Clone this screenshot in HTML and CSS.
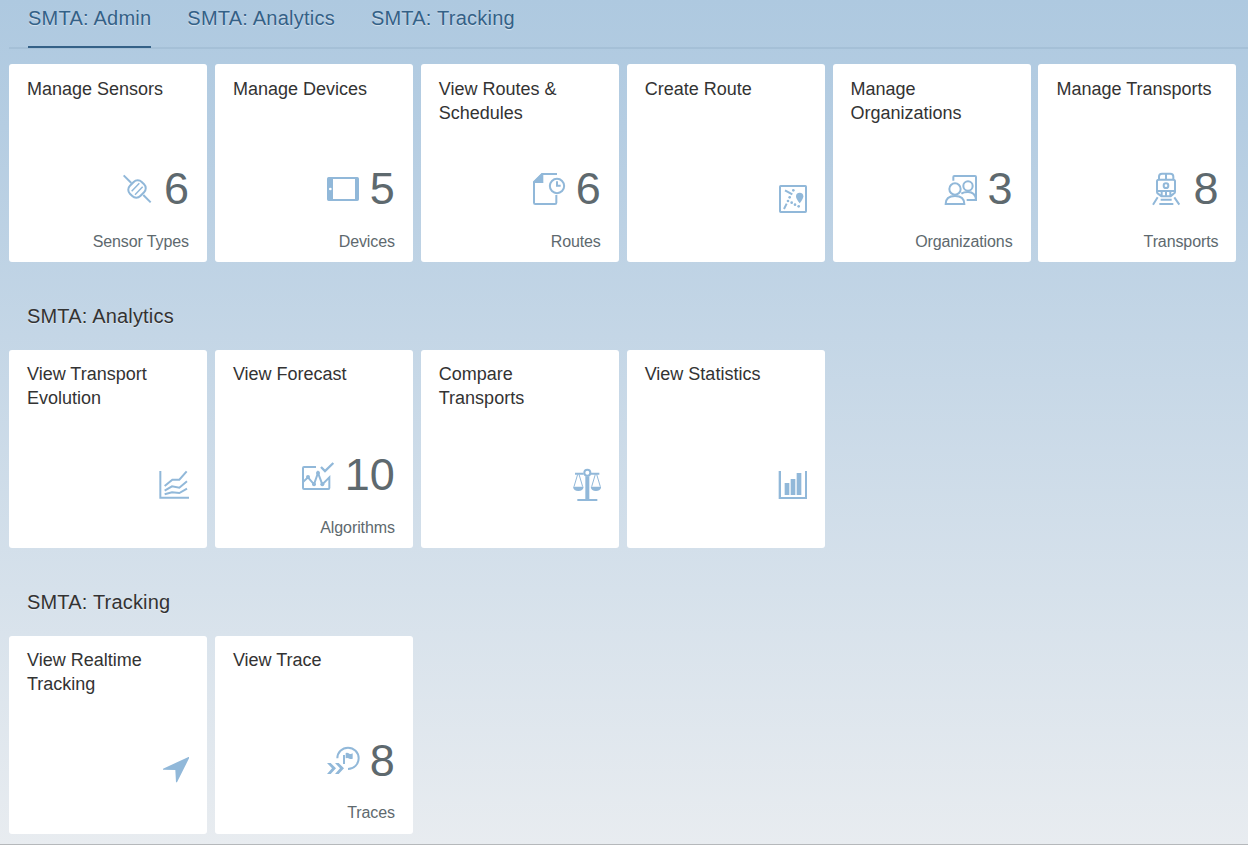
FILE: index.html
```html
<!DOCTYPE html>
<html lang="en">
<head>
<meta charset="utf-8">
<title>SMTA Launchpad</title>
<link rel="stylesheet" href="styles.css">
</head>
<body>
<div class="launchpad">
  <nav class="tabs">
    <a class="tab tab-active">SMTA: Admin</a>
    <a class="tab">SMTA: Analytics</a>
    <a class="tab">SMTA: Tracking</a>
  </nav>
  <main class="groups">
    <section class="group group-first">
      <div class="tiles">
        <article class="tile">
          <h3 class="title">Manage Sensors</h3>
          <div class="content">
            <svg class="icon" viewBox="30 24 120 120"><path d="M41 46L64 69M100 105L122 127"/><rect x="59" y="62" width="44" height="50" rx="17" transform="rotate(45 81 87)"/><path class="medium" d="M65 94L88 70M75 104L98 80"/></svg>
            <span class="number">6</span>
          </div>
          <p class="footer">Sensor Types</p>
        </article>
        <article class="tile">
          <h3 class="title">Manage Devices</h3>
          <div class="content">
            <svg class="icon solid" viewBox="33 24 120 120"><path fill-rule="evenodd" d="M41 51H127Q132 51 132 56V118Q132 123 127 123H41Q36 123 36 118V56Q36 51 41 51ZM54 57V117H120V57Z"/><circle class="hole" cx="46" cy="87" r="4"/></svg>
            <span class="number">5</span>
          </div>
          <p class="footer">Devices</p>
        </article>
        <article class="tile">
          <h3 class="title">View Routes &amp; Schedules</h3>
          <div class="content">
            <svg class="icon" viewBox="36 24 120 120"><path d="M111 42H66L42 66V128Q42 132 46 132H105Q109 132 109 128V105"/><path class="fill" d="M66 40H70V69H40V66Z"/><circle cx="111" cy="78" r="21.5"/><path d="M111 64V77H122"/></svg>
            <span class="number">6</span>
          </div>
          <p class="footer">Routes</p>
        </article>
        <article class="tile">
          <h3 class="title">Create Route</h3>
          <div class="content content-icon">
            <svg class="icon" viewBox="6 24 120 120"><rect x="45" y="48" width="78" height="78" rx="2"/><path d="M60 61L82 73M65 101L57 117"/><path class="fill" d="M104 100Q93 87 93 79A11 11 0 0 1 115 79Q115 87 104 100Z"/><g class="fill"><circle cx="85" cy="61" r="4"/><circle cx="74" cy="82" r="4"/><circle cx="69" cy="93" r="4"/><circle cx="80" cy="98" r="4"/><circle cx="90" cy="104" r="4"/><circle cx="101" cy="109" r="4"/></g></svg>
          </div>
        </article>
        <article class="tile">
          <h3 class="title">Manage Organizations</h3>
          <div class="content">
            <svg class="icon" viewBox="42 24 120 120"><path d="M70 62V51Q70 48 73 48H135Q138 48 138 51V120H110"/><circle cx="75" cy="87" r="17"/><circle cx="114" cy="78" r="14"/><path d="M47 132Q47 108 75 108T103 132ZM94 101Q101 96 114 96Q136 96 138 119"/></svg>
            <span class="number">3</span>
          </div>
          <p class="footer">Organizations</p>
        </article>
        <article class="tile">
          <h3 class="title">Manage Transports</h3>
          <div class="content">
            <svg class="icon" viewBox="28 24 120 120"><path d="M58 60V50Q58 41 67 41H92Q101 41 101 50V60M79 42V58"/><path d="M57 59H101Q106 59 106 64V96Q106 99 102 101L93 109H65L55 101Q52 99 52 96V64Q52 59 57 59ZM52 93H106M66 93V109M79 93V109M92 93V109"/><circle cx="79" cy="77" r="7"/><path d="M54 112L40 134M104 112L119 134M63 119H96M59 132H101"/></svg>
            <span class="number">8</span>
          </div>
          <p class="footer">Transports</p>
        </article>
      </div>
    </section>
    <section class="group group-middle">
      <h2 class="group-title">SMTA: Analytics</h2>
      <div class="tiles">
        <article class="tile">
          <h3 class="title">View Transport Evolution</h3>
          <div class="content content-icon">
            <svg class="icon" viewBox="12 27 120 120"><path d="M46 48V128H134M59 93L82 74H103L125 49M59 107L81 94L103 98L126 79M59 118L81 112L103 114L126 101"/></svg>
          </div>
        </article>
        <article class="tile">
          <h3 class="title">View Forecast</h3>
          <div class="content">
            <svg class="icon" viewBox="33 27 120 120"><path d="M78 66H42Q39 66 39 69V129Q39 132 42 132H115Q118 132 118 129V97L97 118L84 84L72 118L54 97L39 111"/><path class="bold" d="M93 66L105 78L130 54"/><g class="fill"><circle cx="54" cy="96" r="6"/><circle cx="84" cy="84" r="6"/><circle cx="72" cy="118" r="6"/><circle cx="97" cy="118" r="6"/></g></svg>
            <span class="number">10</span>
          </div>
          <p class="footer">Algorithms</p>
        </article>
        <article class="tile">
          <h3 class="title">Compare Transports</h3>
          <div class="content content-icon">
            <svg class="icon" viewBox="3 27 120 120"><path d="M45 56H71M93 56H118M52 135H112"/><circle cx="82" cy="53" r="9"/><path class="fill" d="M76 64H88V134H76ZM39 95H71Q69 108 55 108T39 95ZM92 95H124Q122 108 108 108T92 95Z"/><path class="thin" d="M53 58L42 95M57 58L68 95M106 58L95 95M110 58L121 95"/></svg>
          </div>
        </article>
        <article class="tile">
          <h3 class="title">View Statistics</h3>
          <div class="content content-icon">
            <svg class="icon solid" viewBox="6 27 120 120"><path d="M41 48H48V126H120V48H127V132H41ZM59 84H73V120H59ZM77 72H91V120H77ZM95 54H109V120H95Z"/></svg>
          </div>
        </article>
      </div>
    </section>
    <section class="group">
      <h2 class="group-title">SMTA: Tracking</h2>
      <div class="tiles">
        <article class="tile">
          <h3 class="title">View Realtime Tracking</h3>
          <div class="content content-icon">
            <svg class="icon solid" viewBox="-3 45 120 120"><path d="M120 64L81 142H78L76 105L39 104V101Z"/></svg>
          </div>
        </article>
        <article class="tile">
          <h3 class="title">View Trace</h3>
          <div class="content">
            <svg class="icon" viewBox="528 15 120 120"><path d="M562 70A32 32 0 1 1 594 102"/><path class="fill" d="M579 60H585V87H579ZM587 54Q593 52 598 56Q603 58 608 55V71Q603 73 598 71Q593 67 587 70ZM531 84H542L558 100L542 117H531L546 100ZM555 84H566L582 100L566 117H555L570 100Z"/></svg>
            <span class="number">8</span>
          </div>
          <p class="footer">Traces</p>
        </article>
      </div>
    </section>
  </main>
</div>
</body>
</html>
```
FILE: styles.css
```css
* {
  box-sizing: border-box;
}

body {
  margin: 0;
  font-family: "Liberation Sans", Arial, sans-serif;
  color: #333;
}

h2,
h3,
p {
  margin: 0;
  font-weight: normal;
}

.launchpad {
  height: 845px;
  overflow: hidden;
  background: linear-gradient(to bottom, #aec9e0 0%, #b5cde2 15%, #e8ecf0 100%);
  border-bottom: 1px solid #b5b8bb;
}

.tabs {
  display: flex;
  gap: 36px;
  height: 49px;
  margin-left: 9px;
  padding-left: 19px;
  border-bottom: 2px solid #a5c0d7;
}

.tab {
  height: 48px;
  padding-top: 6px;
  font-size: 20px;
  line-height: 24px;
  letter-spacing: 0.23px;
  color: #346187;
  text-shadow: 0 1px 1px rgba(255, 255, 255, 0.5);
}

.tab-active {
  border-bottom: 2px solid #346187;
}

.groups {
  padding: 15px 0 0 9px;
}

.group-title {
  height: 88px;
  padding: 42px 18px 0;
  font-size: 20px;
  line-height: 24px;
  letter-spacing: 0.18px;
  text-shadow: 0 1px 1px rgba(255, 255, 255, 0.5);
}

.tiles {
  display: flex;
  gap: 7.9px;
}

.tile {
  display: flex;
  flex-direction: column;
  flex: none;
  width: 198px;
  height: 198px;
  padding: 12px 18px 9px;
  background: #fff;
  border-radius: 3px;
}

.title {
  height: 92px;
  font-size: 18px;
  line-height: 24px;
}

.group-first .title {
  padding-top: 1px;
}

.content {
  display: flex;
  justify-content: flex-end;
  align-items: center;
  gap: 4px;
  height: 40px;
}

.content-icon {
  margin-top: 10px;
}

.icon {
  width: 40px;
  height: 40px;
  fill: none;
  stroke: #91b8d9;
  stroke-width: 6;
}

.solid,
.fill {
  fill: #91b8d9;
  stroke: none;
}

.hole {
  fill: #fff;
}

.thin {
  stroke-width: 3;
}

.medium {
  stroke-width: 4.5;
}

.bold {
  stroke-width: 7;
}

.number {
  padding-top: 2px;
  font-size: 45px;
  line-height: 40px;
  color: #5e696e;
}

.footer {
  margin-top: auto;
  font-size: 16px;
  line-height: 24px;
  letter-spacing: -0.1px;
  text-align: right;
  color: #5e696e;
}

.group-first .tile,
.group-middle .tile {
  padding-bottom: 8px;
}
```
